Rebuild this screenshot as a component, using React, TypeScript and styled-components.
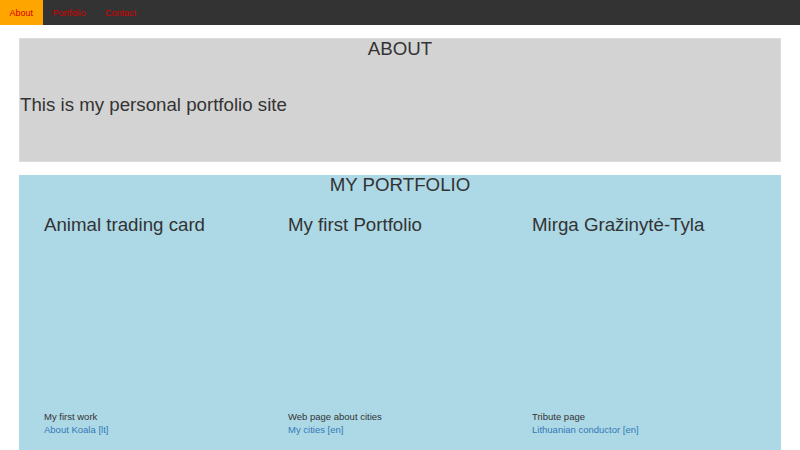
import styled, { createGlobalStyle } from 'styled-components'

const GlobalStyle = createGlobalStyle`
  body {
    margin: 0;
    font-family: "Liberation Sans", Arial, sans-serif;
    color: #333;
    background: #fff;
  }
`

const Nav = styled.nav`
  display: flex;
  height: 25px;
  background: #333;
`

const NavLink = styled.a<{ $active?: boolean }>`
  display: flex;
  align-items: center;
  padding: 0 10px 0 9.5px;
  font-size: 9px;
  color: #d40000;
  text-decoration: none;
  background: ${(p) => (p.$active ? 'orange' : 'transparent')};
`

const Main = styled.main`
  display: flex;
  flex-direction: column;
  gap: 13px;
  padding: 13px 19px 0;
`

const About = styled.section`
  height: 124px;
  background: lightgray;
  box-sizing: border-box;
  border: 1px solid #ddd;
`

const Heading = styled.h2`
  margin: 0;
  font-size: 18.7px;
  font-weight: normal;
  line-height: 20px;
  text-align: center;
`

const Intro = styled.p`
  margin: 34px 0 0;
  font-size: 18.7px;
  line-height: 24px;
`

const Portfolio = styled.section`
  background: lightblue;
  height: 290px;
`

const Cards = styled.div`
  display: grid;
  grid-template-columns: repeat(3, 244px);
  padding: 0 25px;
  margin-top: 18px;
`

const Card = styled.div`
  display: flex;
  flex-direction: column;
  height: 224px;
`

const CardTitle = styled.h3`
  margin: 0;
  font-size: 18.7px;
  font-weight: normal;
  line-height: 24px;
  flex: 1;
`

const CardText = styled.div`
  font-size: 9.5px;
  line-height: 13px;
`

const CardLink = styled.a`
  font-size: 9.5px;
  line-height: 14px;
  color: #337ab7;
  text-decoration: none;
`

const works = [
  { title: 'Animal trading card', text: 'My first work', link: 'About Koala [lt]' },
  { title: 'My first Portfolio', text: 'Web page about cities', link: 'My cities [en]' },
  { title: 'Mirga Gražinytė-Tyla', text: 'Tribute page', link: 'Lithuanian conductor [en]' },
]

function App() {
  return (
    <>
      <GlobalStyle />
      <Nav>
        <NavLink $active href="#about">About</NavLink>
        <NavLink href="#portfolio">Portfolio</NavLink>
        <NavLink href="#contact">Contact</NavLink>
      </Nav>
      <Main>
        <About id="about">
          <Heading>ABOUT</Heading>
          <Intro>This is my personal portfolio site</Intro>
        </About>
        <Portfolio id="portfolio">
          <Heading>MY PORTFOLIO</Heading>
          <Cards>
            {works.map((w) => (
              <Card key={w.title}>
                <CardTitle>{w.title}</CardTitle>
                <CardText>{w.text}</CardText>
                <CardLink href="#">{w.link}</CardLink>
              </Card>
            ))}
          </Cards>
        </Portfolio>
      </Main>
    </>
  )
}

export default App
